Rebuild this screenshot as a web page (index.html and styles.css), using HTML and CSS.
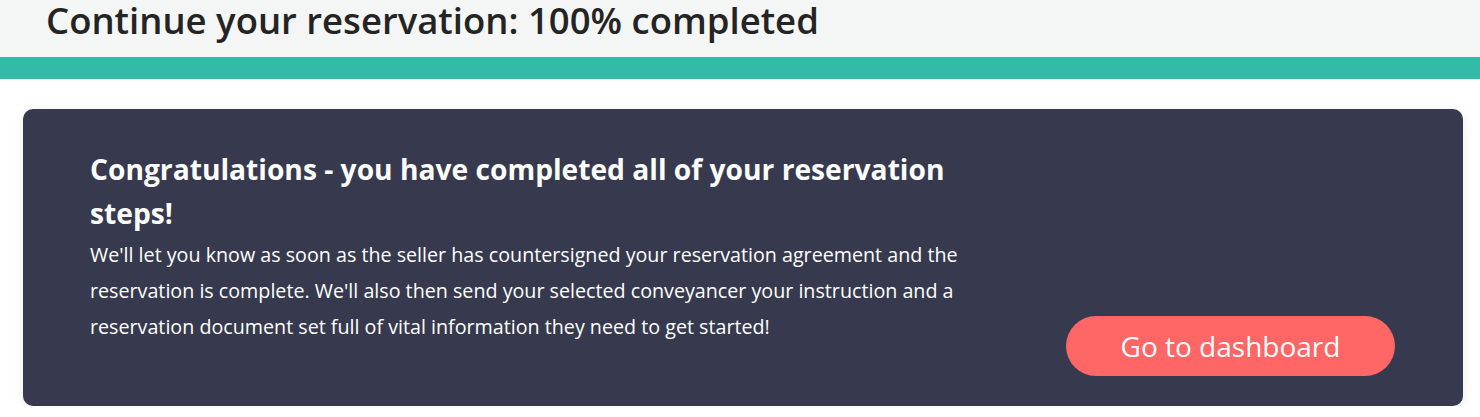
FILE: index.html
```html
<!DOCTYPE html>
<html>

<head>
    <meta name="viewport" content="width=device-width, initial-scale=1.0">
    <title>Reservation</title>
    <link rel="stylesheet" href="styles.css">
</head>

<body>
    <header class="header">
        <h1>Continue your reservation: 100% completed</h1>
    </header>
    <div class="progress"></div>
    <section class="card">
        <div class="card-text">
            <h2>Congratulations - you have completed all of your reservation steps!</h2>
            <p>We'll let you know as soon as the seller has countersigned your reservation agreement and the reservation is complete. We'll also then send your selected conveyancer your instruction and a reservation document set full of vital information they need to get started!</p>
        </div>
        <button class="btn">Go to dashboard</button>
    </section>
</body>

</html>
```

FILE: styles.css
```css
body {
    margin: 0;
    font-family: "Open Sans", "Lato", sans-serif;
    background: #ffffff;
}

.header {
    height: 57px;
    background: #f4f5f5;
    padding-left: 46px;
}

.header h1 {
    margin: 0;
    font-size: 36.5px;
    font-weight: 600;
    line-height: 41px;
    color: #242424;
}

.progress {
    height: 22px;
    background: #33bbaa;
}

.card {
    display: flex;
    justify-content: space-between;
    margin: 30px 17px 0 23px;
    height: 297px;
    box-sizing: border-box;
    padding: 38px 68px 30px 67px;
    background: #373a4e;
    border-radius: 10px;
    box-shadow: 0 2px 12px rgba(0, 0, 0, 0.08);
}

.card-text {
    width: 890px;
}

.card h2 {
    margin: 0;
    font-size: 28.2px;
    font-weight: 700;
    line-height: 44px;
    color: #ffffff;
    width: 880px;
}

.card p {
    margin: 2px 0 0;
    font-size: 19.7px;
    line-height: 36px;
    color: #ffffff;
}

.btn {
    align-self: flex-end;
    width: 329px;
    height: 60px;
    border: none;
    border-radius: 30px;
    background: #ff6666;
    color: #ffffff;
    font-family: inherit;
    font-size: 28px;
}
```
